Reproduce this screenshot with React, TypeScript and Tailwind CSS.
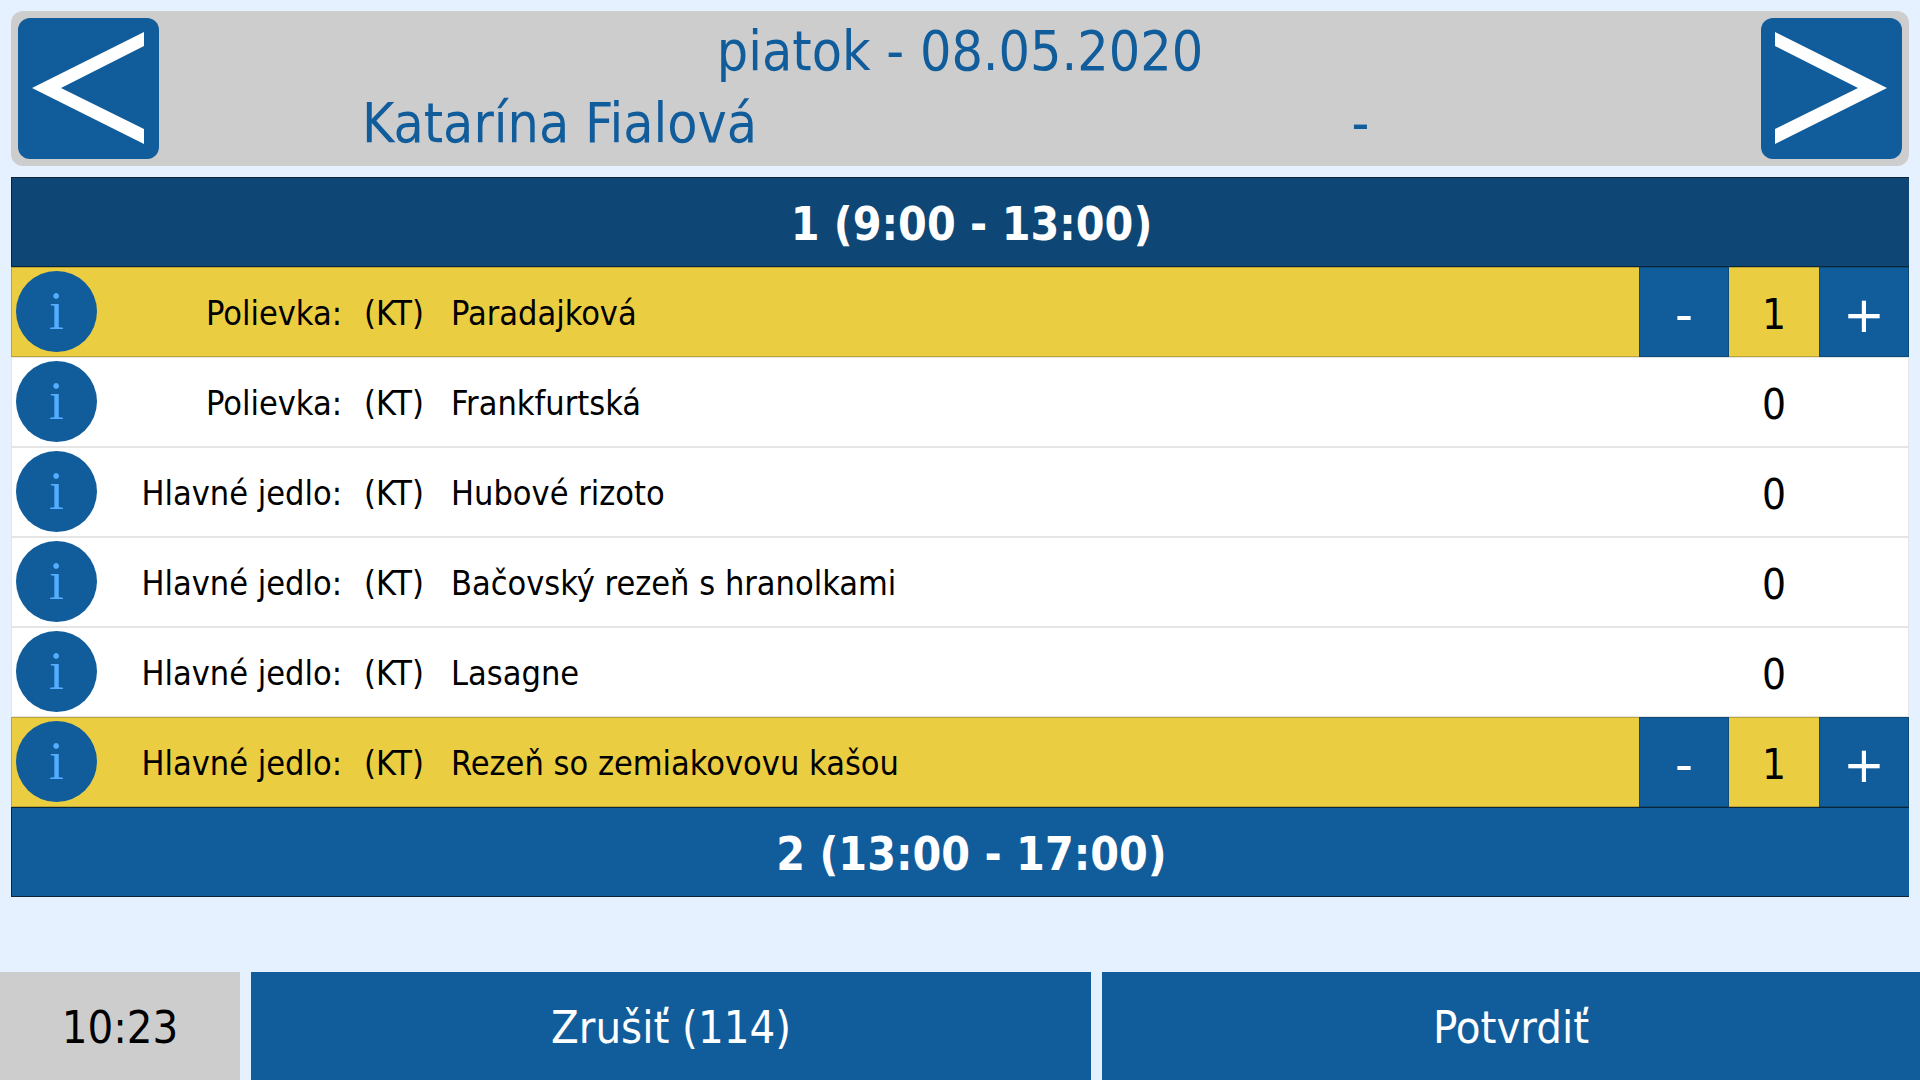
type Meal = { kind: string; name: string; count: number };

const MEALS: Meal[] = [
  { kind: 'Polievka:', name: 'Paradajková', count: 1 },
  { kind: 'Polievka:', name: 'Frankfurtská', count: 0 },
  { kind: 'Hlavné jedlo:', name: 'Hubové rizoto', count: 0 },
  { kind: 'Hlavné jedlo:', name: 'Bačovský rezeň s hranolkami', count: 0 },
  { kind: 'Hlavné jedlo:', name: 'Lasagne', count: 0 },
  { kind: 'Hlavné jedlo:', name: 'Rezeň so zemiakovovu kašou', count: 1 },
];

function DayButton({ label, points }: { label: string; points: string }) {
  return (
    <button aria-label={label} className="size-[141px] shrink-0 rounded-xl bg-[#115d9c]">
      <svg viewBox="0 0 141 141" className="size-full" aria-hidden="true">
        <polygon points={points} fill="#fff" />
      </svg>
    </button>
  );
}

function GroupHeader({ title, active }: { title: string; active?: boolean }) {
  return (
    <button
      className={`flex h-[90px] w-full items-center justify-center border border-r-0 border-[#0a2438] pt-1 pl-[22px] text-[46px] font-bold text-white ${
        active ? 'bg-[#0e4776]' : 'bg-[#115d9c]'
      }`}
    >
      {title}
    </button>
  );
}

function StepButton({ label, sign }: { label: string; sign: string }) {
  return (
    <button
      aria-label={label}
      className="flex h-full w-[90px] items-center justify-center border border-black/20 bg-[#115d9c] pt-1.5 font-['DejaVu_Sans',sans-serif] text-[50px] text-white"
    >
      {sign}
    </button>
  );
}

function MealRow({ meal }: { meal: Meal }) {
  const ordered = meal.count > 0;
  return (
    <li className={`relative flex h-[90px] items-center ${ordered ? 'bg-[#ebcd41]' : 'bg-white'}`}>
      <div
        className={`pointer-events-none absolute inset-0 border ${ordered ? 'border-black/20' : 'border-black/10'}`}
      />
      <button
        aria-label={`Informácie: ${meal.name}`}
        className="mt-1 ml-[5px] size-[81px] shrink-0 self-start rounded-full bg-[#115d9c] text-center font-['Liberation_Serif',serif] text-[54px] text-[#54aeff]"
      >
        i
      </button>
      <span className="w-[245px] pt-0.5 text-right text-[34px]">{meal.kind}</span>
      <span className="ml-[22px] w-[87px] pt-0.5 text-[34px]">(KT)</span>
      <span className="min-w-0 flex-1 truncate pt-0.5 text-[34px]">{meal.name}</span>
      <div className="relative flex h-full w-[270px] shrink-0 items-center justify-center">
        {ordered && <StepButton label={`Ubrať ${meal.name}`} sign="-" />}
        <span className="w-[90px] pt-1 text-center text-[42px]">{meal.count}</span>
        {ordered && <StepButton label={`Pridať ${meal.name}`} sign="+" />}
      </div>
    </li>
  );
}

export default function App() {
  return (
    <div className="flex min-h-screen flex-col bg-[#e5f1ff] font-['DejaVu_Sans_Condensed','DejaVu_Sans',sans-serif] text-black">
      <header className="mx-[11px] mt-[11px] flex items-center rounded-xl bg-[#cdcdcd] p-[7px] text-[#115d9c]">
        <DayButton label="Predchádzajúci deň" points="14,70 126,14 126,28 43,70 126,111 126,126" />
        <div className="-mt-2 -mb-1 min-w-0 flex-1 text-center text-[55px] leading-[72px]">
          <h1>piatok - 08.05.2020</h1>
          <div className="grid grid-cols-2">
            <span>Katarína Fialová</span>
            <span>-</span>
          </div>
        </div>
        <DayButton label="Nasledujúci deň" points="126,70 14,14 14,28 97,70 14,111 14,126" />
      </header>

      <main className="mx-[11px] mt-[11px]">
        <GroupHeader title="1 (9:00 - 13:00)" active />
        <ul>
          {MEALS.map((meal) => (
            <MealRow key={meal.name} meal={meal} />
          ))}
        </ul>
        <GroupHeader title="2 (13:00 - 17:00)" />
      </main>

      <footer className="mt-auto flex h-[108px] gap-[11px] text-[45px]">
        <time className="flex w-60 shrink-0 items-center justify-center bg-[#cdcdcd] pt-1">10:23</time>
        <button className="w-[840px] bg-[#115d9c] pt-1 text-white">Zrušiť (114)</button>
        <button className="min-w-0 flex-1 bg-[#115d9c] pt-1 text-white">Potvrdiť</button>
      </footer>
    </div>
  );
}
